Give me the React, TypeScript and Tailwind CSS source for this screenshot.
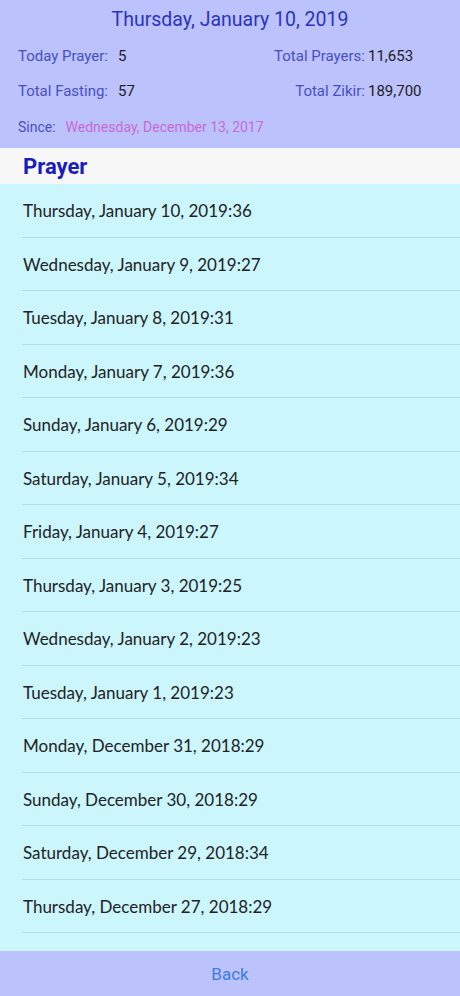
const rows = [
  'Thursday, January 10, 2019:36',
  'Wednesday, January 9, 2019:27',
  'Tuesday, January 8, 2019:31',
  'Monday, January 7, 2019:36',
  'Sunday, January 6, 2019:29',
  'Saturday, January 5, 2019:34',
  'Friday, January 4, 2019:27',
  'Thursday, January 3, 2019:25',
  'Wednesday, January 2, 2019:23',
  'Tuesday, January 1, 2019:23',
  'Monday, December 31, 2018:29',
  'Sunday, December 30, 2018:29',
  'Saturday, December 29, 2018:34',
  'Thursday, December 27, 2018:29',
  'Wednesday, December 26, 2018:31',
];

export default function App() {
  return (
    <div className="h-[996px] w-[460px] flex flex-col overflow-hidden bg-[#cbf6fb] font-['Roboto',sans-serif]">
      {/* Summary header */}
      <div className="h-[148px] shrink-0 bg-[#bcc2fb] flex flex-col">
        <div className="h-[40px] flex items-center justify-center text-[19.5px] text-[#2b35bd]">
          Thursday, January 10, 2019
        </div>
        <div className="h-[33px] flex items-center justify-between">
          <div className="flex items-baseline">
            <span className="w-[108px] text-right text-[15px] text-[#4a50c2]">Today Prayer:</span>
            <span className="pl-[10px] text-[15px] text-[#1c1c28]">5</span>
          </div>
          <div className="flex items-baseline pr-[40px]">
            <span className="text-[15px] text-[#4a50c2]">Total Prayers:</span>
            <span className="w-[55px] pl-[3px] text-[15px] text-[#1c1c28]">11,653</span>
          </div>
        </div>
        <div className="h-[37px] flex items-center justify-between">
          <div className="flex items-baseline">
            <span className="w-[108px] text-right text-[15px] text-[#4a50c2]">Total Fasting:</span>
            <span className="pl-[10px] text-[15px] text-[#1c1c28]">57</span>
          </div>
          <div className="flex items-baseline pr-[40px]">
            <span className="text-[15px] text-[#4a50c2]">Total Zikir:</span>
            <span className="w-[55px] pl-[3px] text-[15px] text-[#1c1c28]">189,700</span>
          </div>
        </div>
        <div className="h-[38px] flex items-center pl-[18px] pb-[4px] text-[14px]">
          <span className="text-[#4a50c2]">Since:</span>
          <span className="pl-[10px] text-[#c86ad6]">Wednesday, December 13, 2017</span>
        </div>
      </div>

      {/* Section header */}
      <div className="h-[36px] shrink-0 bg-[#f7f7f7] flex items-center pl-[23px] text-[22px] font-bold text-[#1a1dbd]">
        Prayer
      </div>

      {/* List */}
      <div className="flex-1 overflow-hidden">
        {rows.map((r) => (
          <div key={r} className="h-[53.5px] pl-[22px]">
            <div className="h-full flex items-center border-b border-[#b3dde4] pl-[1px] pt-[1px] text-[17px] text-[#222226] font-['Lato',sans-serif]">
              {r}
            </div>
          </div>
        ))}
      </div>

      {/* Bottom bar */}
      <div className="h-[45px] shrink-0 bg-[#bcc2fb] flex items-center justify-center pt-[3px] text-[17px] text-[#3b7de0]">
        Back
      </div>
    </div>
  );
}
